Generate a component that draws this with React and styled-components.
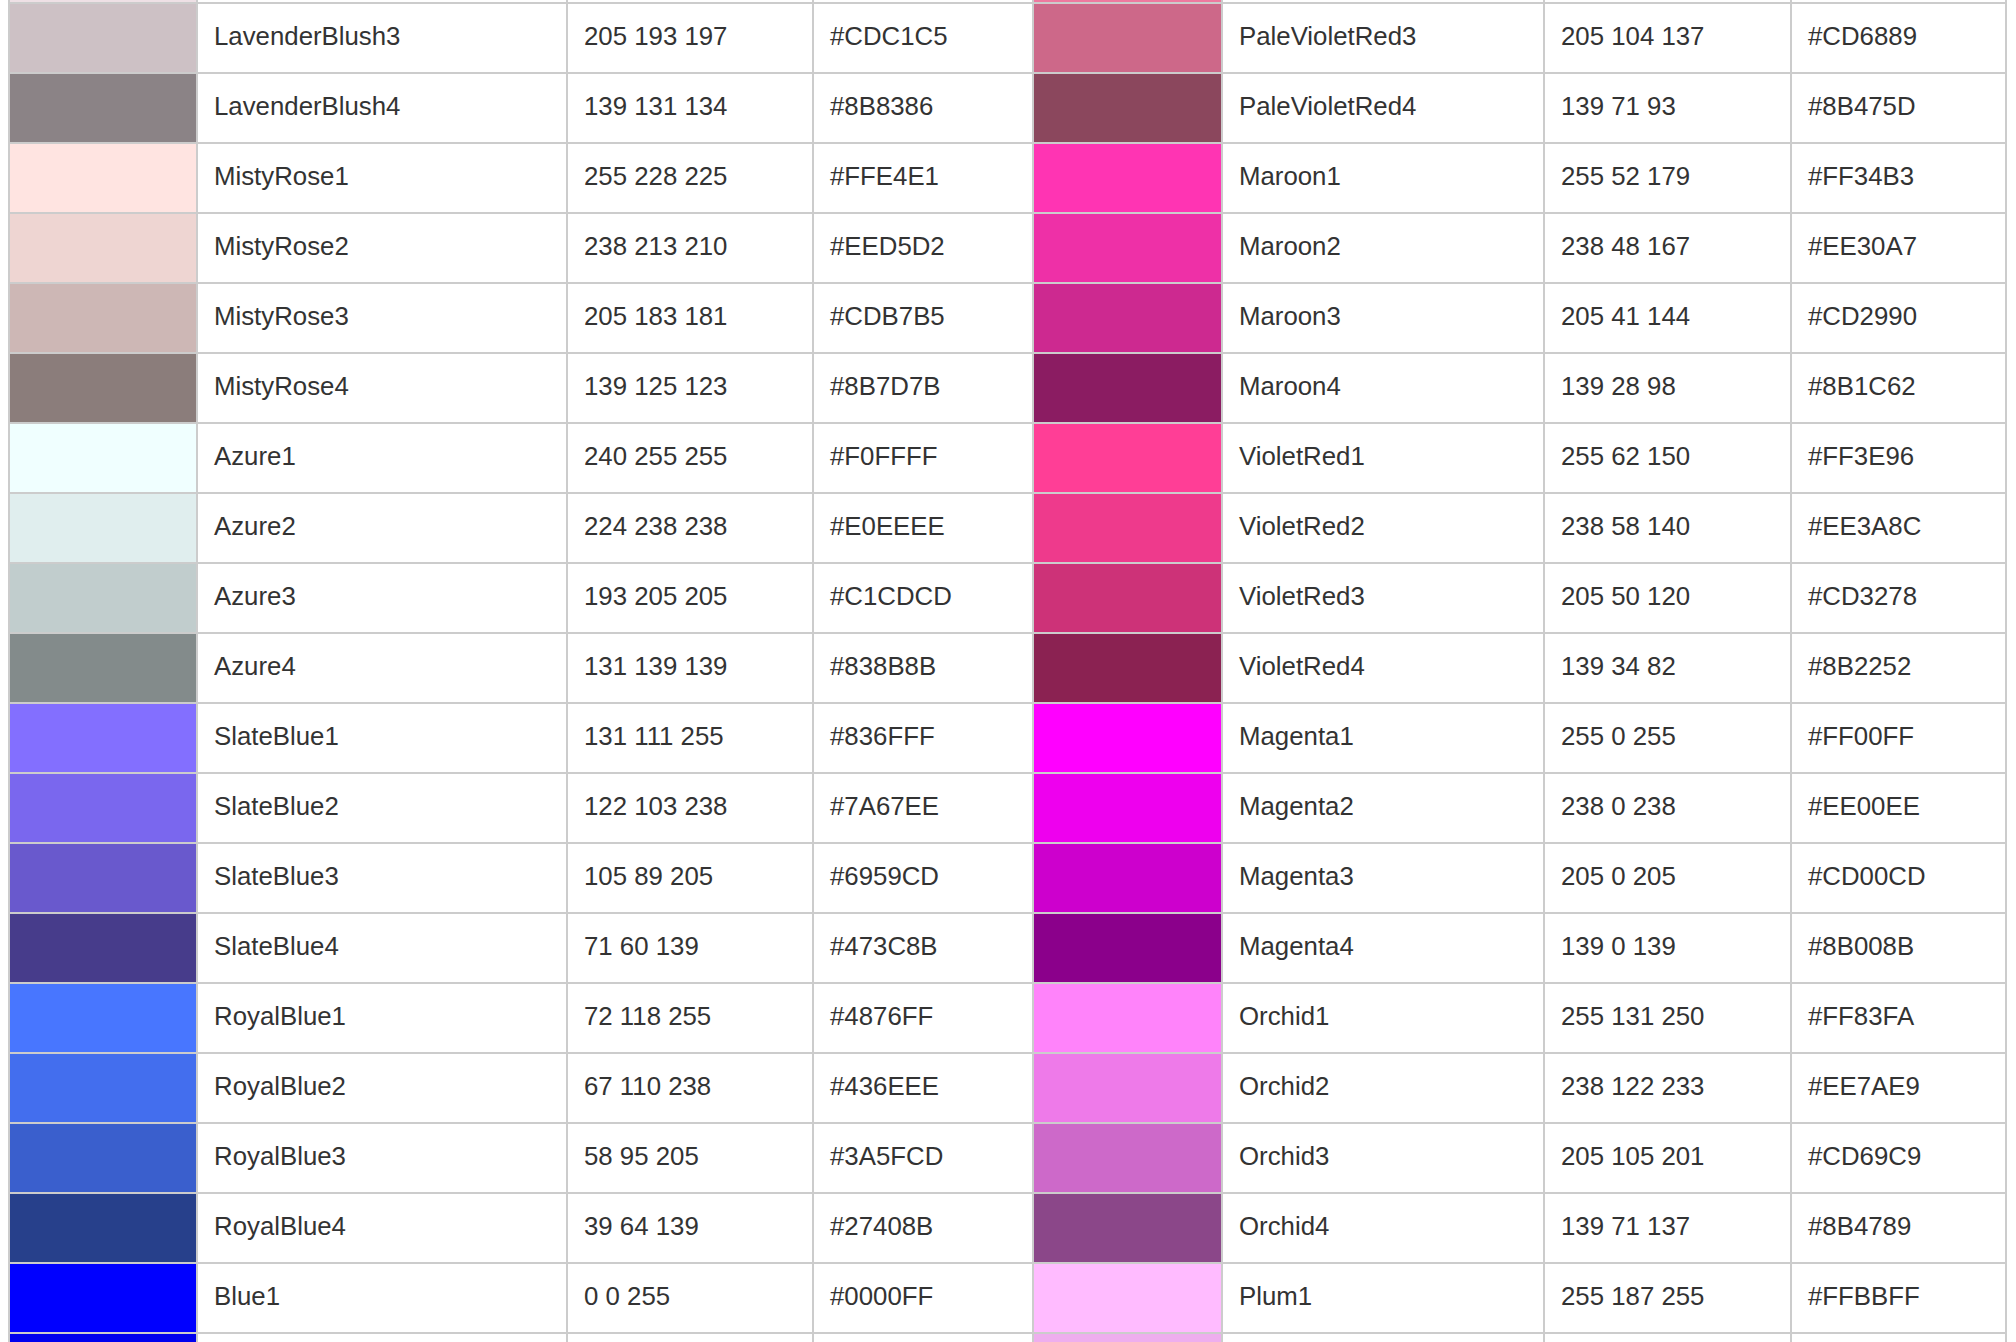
import React from "react";
import styled, { createGlobalStyle } from "styled-components";

const rows = [
  ["LavenderBlush2", "238 224 229", "#EEE0E5", "PaleVioletRed2", "238 121 159", "#EE799F"],
  ["LavenderBlush3", "205 193 197", "#CDC1C5", "PaleVioletRed3", "205 104 137", "#CD6889"],
  ["LavenderBlush4", "139 131 134", "#8B8386", "PaleVioletRed4", "139 71 93", "#8B475D"],
  ["MistyRose1", "255 228 225", "#FFE4E1", "Maroon1", "255 52 179", "#FF34B3"],
  ["MistyRose2", "238 213 210", "#EED5D2", "Maroon2", "238 48 167", "#EE30A7"],
  ["MistyRose3", "205 183 181", "#CDB7B5", "Maroon3", "205 41 144", "#CD2990"],
  ["MistyRose4", "139 125 123", "#8B7D7B", "Maroon4", "139 28 98", "#8B1C62"],
  ["Azure1", "240 255 255", "#F0FFFF", "VioletRed1", "255 62 150", "#FF3E96"],
  ["Azure2", "224 238 238", "#E0EEEE", "VioletRed2", "238 58 140", "#EE3A8C"],
  ["Azure3", "193 205 205", "#C1CDCD", "VioletRed3", "205 50 120", "#CD3278"],
  ["Azure4", "131 139 139", "#838B8B", "VioletRed4", "139 34 82", "#8B2252"],
  ["SlateBlue1", "131 111 255", "#836FFF", "Magenta1", "255 0 255", "#FF00FF"],
  ["SlateBlue2", "122 103 238", "#7A67EE", "Magenta2", "238 0 238", "#EE00EE"],
  ["SlateBlue3", "105 89 205", "#6959CD", "Magenta3", "205 0 205", "#CD00CD"],
  ["SlateBlue4", "71 60 139", "#473C8B", "Magenta4", "139 0 139", "#8B008B"],
  ["RoyalBlue1", "72 118 255", "#4876FF", "Orchid1", "255 131 250", "#FF83FA"],
  ["RoyalBlue2", "67 110 238", "#436EEE", "Orchid2", "238 122 233", "#EE7AE9"],
  ["RoyalBlue3", "58 95 205", "#3A5FCD", "Orchid3", "205 105 201", "#CD69C9"],
  ["RoyalBlue4", "39 64 139", "#27408B", "Orchid4", "139 71 137", "#8B4789"],
  ["Blue1", "0 0 255", "#0000FF", "Plum1", "255 187 255", "#FFBBFF"],
  ["Blue2", "0 0 238", "#0000EE", "Plum2", "238 174 238", "#EEAEEE"]
];

const GlobalStyle = createGlobalStyle`
  html, body {
    margin: 0;
    padding: 0;
    overflow: hidden;
    background: #fff;
  }
`;

function ColorTable() {
  return (
    <Viewport>
      <Table>
        {rows.map((row, idx) => (
          <Row key={idx}>
            <Swatch color={row[2]} />
            <Cell>{row[0]}</Cell>
            <Cell>{row[1]}</Cell>
            <Cell>{row[2]}</Cell>
            <Swatch color={row[5]} />
            <Cell>{row[3]}</Cell>
            <Cell>{row[4]}</Cell>
            <Cell>{row[5]}</Cell>
          </Row>
        ))}
      </Table>
    </Viewport>
  );
}

// the page is scrolled a little: one row sits mostly above the top edge
const Viewport = styled.div`
  height: 100vh;
  overflow: hidden;
  padding: 0 8px;
`;

const Table = styled.div`
  display: flex;
  flex-direction: column;
  width: 1999px;
  margin-top: -68px;
  border-top: 2px solid #cccccc;
  border-left: 2px solid #cccccc;
  box-sizing: border-box;
  font-family: "Liberation Sans", Arial, Helvetica, sans-serif;
  font-size: 25.8px;
  color: #333333;
`;

const Row = styled.div`
  display: grid;
  grid-template-columns: 188px 370px 246px 220px 189px 322px 247px 215px;
  height: 70px;
`;

const Cell = styled.div`
  display: flex;
  align-items: center;
  padding: 0 0 3px 16px;
  border-right: 2px solid #cccccc;
  border-bottom: 2px solid #cccccc;
  box-sizing: border-box;
  white-space: nowrap;
`;

const Swatch = styled.div`
  background: ${props => props.color};
  border-right: 2px solid #cccccc;
  border-bottom: 2px solid #cccccc;
  box-sizing: border-box;
`;

export default function App() {
  return (
    <>
      <GlobalStyle />
      <ColorTable />
    </>
  );
}
